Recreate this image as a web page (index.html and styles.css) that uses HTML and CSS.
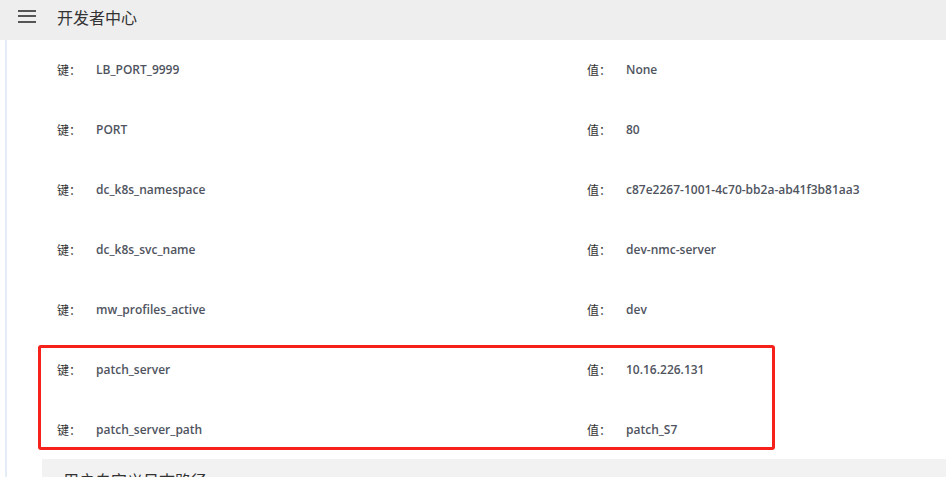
FILE: index.html
```html
<!DOCTYPE html>
<html lang="zh">
<head>
<meta charset="utf-8">
<title>开发者中心</title>
<link rel="stylesheet" href="styles.css">
</head>
<body>
<header class="topbar">
  <span class="menu-btn">
    <svg width="18" height="14" viewBox="0 0 18 14"><rect x="0" y="1" width="18" height="2" fill="#555"/><rect x="0" y="6" width="18" height="2" fill="#555"/><rect x="0" y="12" width="18" height="2" fill="#555"/></svg>
  </span>
  <span class="title">开发者中心</span>
</header>
<main class="main">
  <div class="section">
    <div class="row"><div class="cell"><span class="lbl">键：</span><span class="val">LB_PORT_9999</span></div><div class="cell"><span class="lbl">值：</span><span class="val">None</span></div></div>
    <div class="row"><div class="cell"><span class="lbl">键：</span><span class="val">PORT</span></div><div class="cell"><span class="lbl">值：</span><span class="val">80</span></div></div>
    <div class="row"><div class="cell"><span class="lbl">键：</span><span class="val">dc_k8s_namespace</span></div><div class="cell"><span class="lbl">值：</span><span class="val">c87e2267-1001-4c70-bb2a-ab41f3b81aa3</span></div></div>
    <div class="row"><div class="cell"><span class="lbl">键：</span><span class="val">dc_k8s_svc_name</span></div><div class="cell"><span class="lbl">值：</span><span class="val">dev-nmc-server</span></div></div>
    <div class="row"><div class="cell"><span class="lbl">键：</span><span class="val">mw_profiles_active</span></div><div class="cell"><span class="lbl">值：</span><span class="val">dev</span></div></div>
    <div class="highlight">
      <div class="row"><div class="cell"><span class="lbl">键：</span><span class="val">patch_server</span></div><div class="cell"><span class="lbl">值：</span><span class="val">10.16.226.131</span></div></div>
      <div class="row"><div class="cell"><span class="lbl">键：</span><span class="val">patch_server_path</span></div><div class="cell"><span class="lbl">值：</span><span class="val">patch_S7</span></div></div>
    </div>
  </div>
  <div class="subsection">
    <div class="sub-title">用户自定义日志路径</div>
  </div>
</main>
</body>
</html>
```

FILE: styles.css
```css
html, body {
  margin: 0;
  padding: 0;
  background: #fff;
  overflow: hidden;
}
body {
  font-family: "Open Sans", "Noto Sans CJK SC", sans-serif;
  color: #333;
  width: 947px;
  height: 477px;
}
.topbar {
  height: 40px;
  background: #eeeeee;
  display: flex;
  align-items: center;
  margin-right: 1px;
}
.menu-btn {
  width: 18px;
  height: 14px;
  margin-left: 18px;
  margin-top: -9px;
  display: flex;
}
.title {
  margin-left: 21px;
  margin-top: -6px;
  font-size: 16px;
  color: #333;
  font-family: "Noto Sans CJK SC", sans-serif;
}
.main {
  margin-left: 5px;
  border-left: 2px solid #e3ecf7;
  height: 437px;
}
.section {
  padding-left: 50px;
}
.row {
  height: 60px;
  box-sizing: border-box;
  padding-bottom: 2px;
  display: grid;
  grid-template-columns: 530px 1fr;
  align-items: center;
}
.cell {
  display: flex;
  align-items: center;
}
.lbl {
  width: 39px;
  font-size: 12px;
  color: #333;
  font-family: "Noto Sans CJK SC", sans-serif;
}
.val {
  font-size: 12px;
  font-weight: 600;
  color: #4f5460;
}
.highlight {
  position: relative;
}
.highlight::after {
  content: "";
  position: absolute;
  left: -19px;
  top: 5px;
  width: 731px;
  height: 99px;
  border: 3px solid #f5211a;
  border-radius: 3px;
}
.subsection {
  margin-left: 35px;
  margin-top: -1px;
  background: #f2f2f2;
  height: 40px;
  margin-right: 1px;
}
.sub-title {
  padding-left: 21px;
  padding-top: 9px;
  font-size: 16px;
  color: #333;
  font-family: "Noto Sans CJK SC", sans-serif;
}
```
